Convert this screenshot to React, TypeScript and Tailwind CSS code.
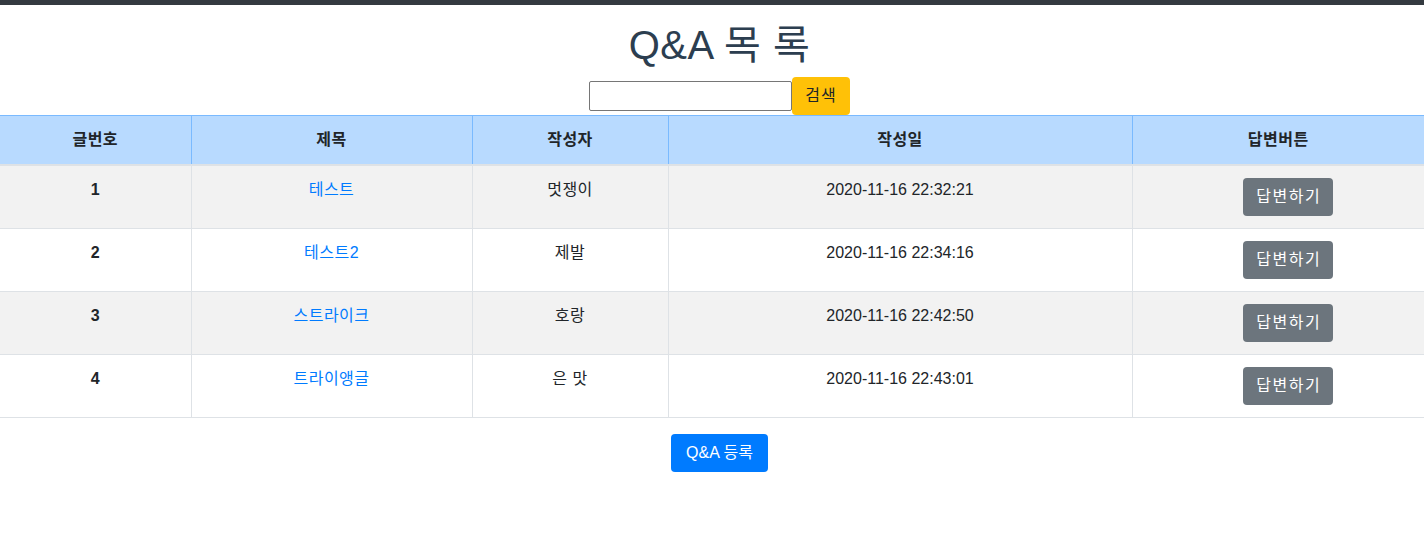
const rows = [
  { no: 1, title: "테스트", writer: "멋쟁이", date: "2020-11-16 22:32:21" },
  { no: 2, title: "테스트2", writer: "제발", date: "2020-11-16 22:34:16" },
  { no: 3, title: "스트라이크", writer: "호랑", date: "2020-11-16 22:42:50" },
  { no: 4, title: "트라이앵글", writer: "은 맛", date: "2020-11-16 22:43:01" },
];

export default function App() {
  return (
    <div className="min-h-[541px] bg-white text-[#212529] text-base font-['Liberation_Sans','Noto_Sans_CJK_KR',sans-serif]">
      <div className="h-[5px] bg-[#343a40]" />

      <div className="pl-[15px] text-center">
        <h1 className="mt-[16px] mb-[8px] text-[40px] leading-[48px] tracking-[0.5px] text-[#2c3e50]">Q&amp;A 목 록</h1>
        <div className="flex items-center justify-center">
          <input
            type="text"
            className="w-[203px] h-[30px] border border-[#767676] rounded-[2px] px-1 outline-none"
          />
          <button className="h-[38px] w-[58px] rounded-[4px] bg-[#ffc107] text-[#212529] tracking-[1px]">검색</button>
        </div>
      </div>

      <table className="w-full table-fixed border-collapse text-center">
        <colgroup>
          <col className="w-[191px]" />
          <col className="w-[281px]" />
          <col className="w-[196px]" />
          <col className="w-[464px]" />
          <col />
        </colgroup>
        <thead>
          <tr className="bg-[#b8daff] border-t border-[#7abaff]">
            {["글번호", "제목", "작성자", "작성일", "답변버튼"].map((h, i) => (
              <th
                key={h}
                className={`h-[48px] p-3 font-bold leading-6 tracking-[0.5px] border-b-2 border-b-[#dee2e6] ${i > 0 ? "border-l border-l-[#7abaff]" : ""}`}
              >
                {h}
              </th>
            ))}
          </tr>
        </thead>
        <tbody>
          {rows.map((r, i) => (
            <tr key={r.no} className={`border-b border-[#dee2e6] ${i % 2 === 0 ? "bg-[#f2f2f2]" : "bg-white"}`}>
              <th className="p-3 align-top font-bold leading-6">{r.no}</th>
              <td className="p-3 align-top leading-6 border-l border-[#dee2e6]">
                <a href="#" className="text-[#007bff] tracking-[0.5px]">{r.title}</a>
              </td>
              <td className="p-3 align-top leading-6 tracking-[0.5px] border-l border-[#dee2e6]">{r.writer}</td>
              <td className="p-3 align-top leading-6 border-l border-[#dee2e6]">{r.date}</td>
              <td className="p-3 pl-[32px] align-top border-l border-[#dee2e6]">
                <button className="h-[38px] pl-[13px] pr-[12px] rounded-[4px] bg-[#6c757d] text-white leading-6 tracking-[1.5px]">답변하기</button>
              </td>
            </tr>
          ))}
        </tbody>
      </table>

      <div className="pl-[15px] mt-[16px] flex justify-center">
        <button className="h-[38px] px-[15px] rounded-[4px] bg-[#007bff] text-white leading-6">Q&amp;A 등록</button>
      </div>
    </div>
  );
}
